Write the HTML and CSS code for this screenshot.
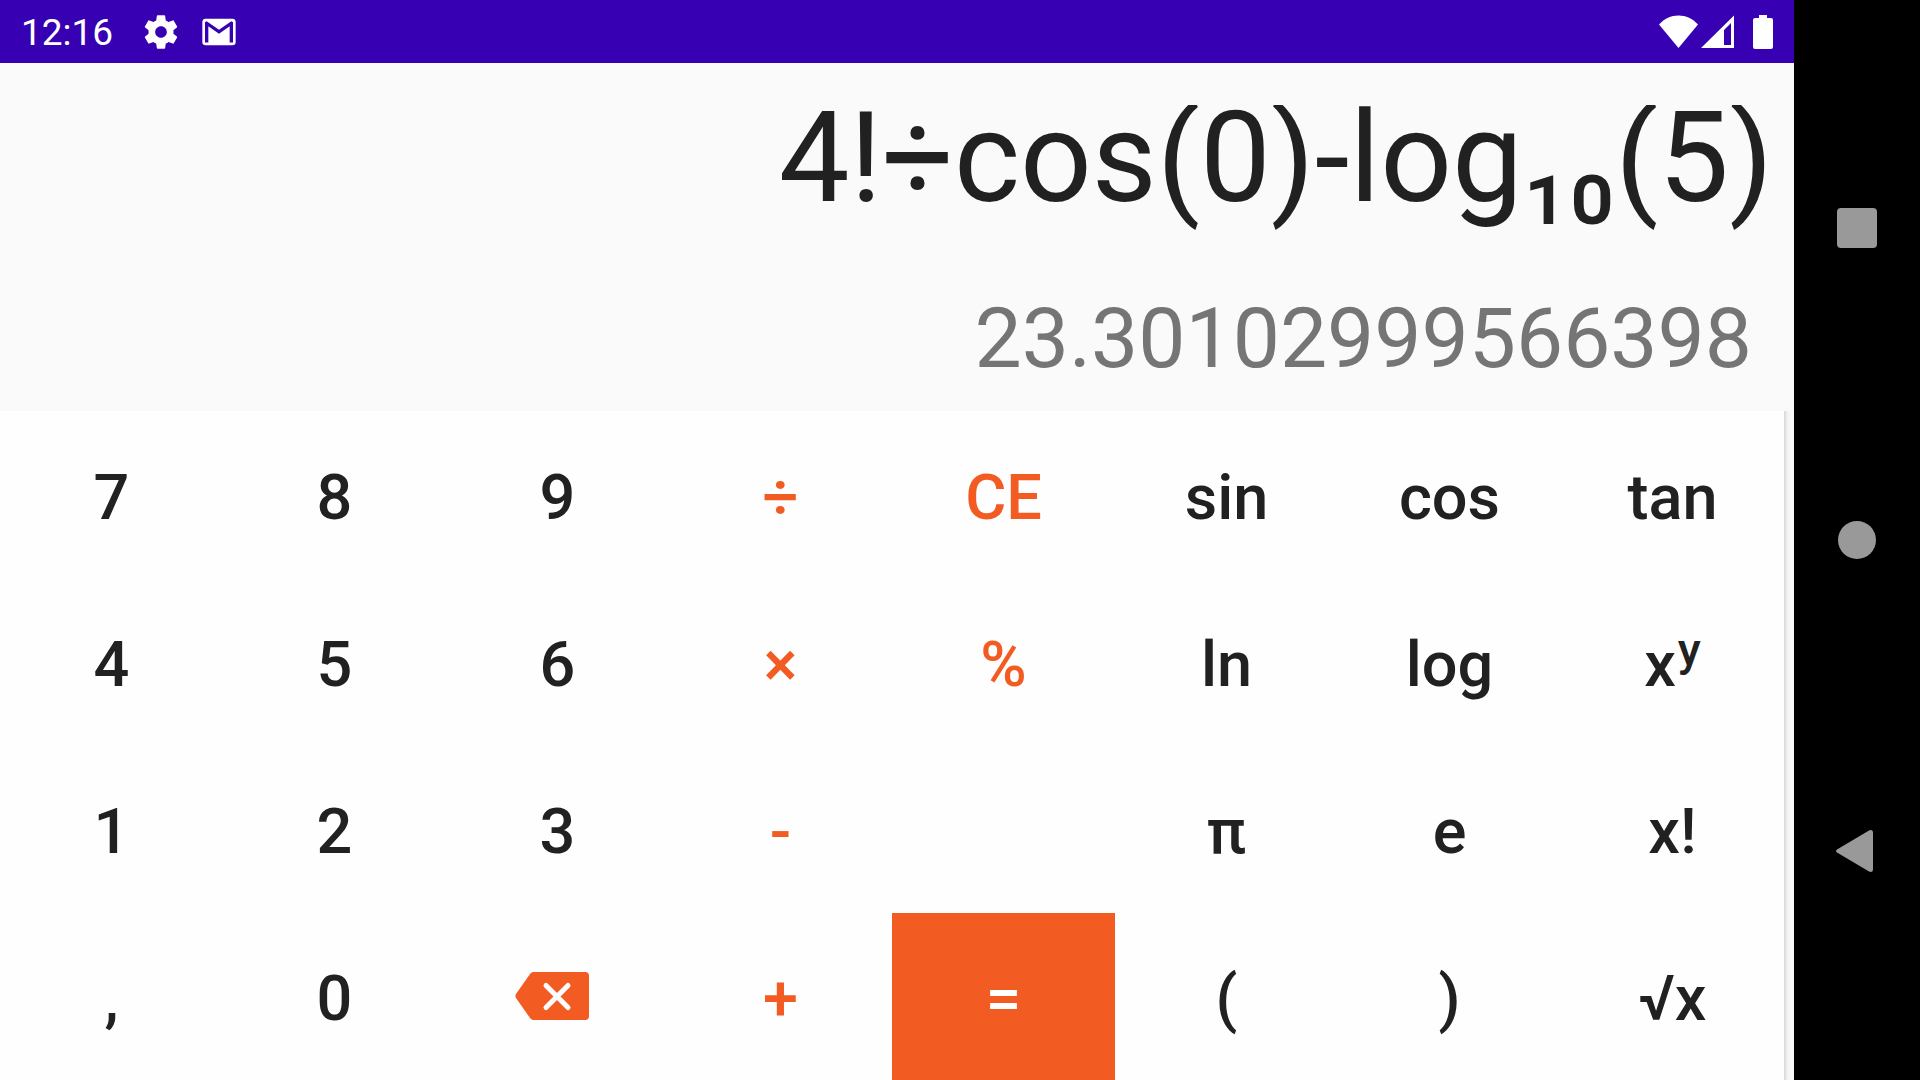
FILE: index.html
```html
<!DOCTYPE html>
<html lang="en">
<head>
<meta charset="utf-8">
<title>Calculator</title>
<link rel="stylesheet" href="styles.css">
</head>
<body>
<div class="screen">
  <div class="app">
    <header class="status">
      <div class="status-left">
        <time class="clock">12:16</time>
        <svg class="status-icon" viewBox="0 0 24 24" aria-hidden="true"><path d="M19.43 12.98c.04-.32.07-.64.07-.98s-.03-.66-.07-.98l2.11-1.65c.19-.15.24-.42.12-.64l-2-3.46c-.12-.22-.39-.3-.61-.22l-2.49 1c-.52-.4-1.08-.73-1.69-.98l-.38-2.65C14.46 2.18 14.25 2 14 2h-4c-.25 0-.46.18-.49.42l-.38 2.65c-.61.25-1.17.59-1.69.98l-2.49-1c-.23-.09-.49 0-.61.22l-2 3.46c-.13.22-.07.49.12.64l2.11 1.65c-.04.32-.07.65-.07.98s.03.66.07.98l-2.11 1.65c-.19.15-.24.42-.12.64l2 3.46c.12.22.39.3.61.22l2.49-1c.52.4 1.08.73 1.69.98l.38 2.65c.03.24.24.42.49.42h4c.25 0 .46-.18.49-.42l.38-2.65c.61-.25 1.17-.59 1.69-.98l2.49 1c.23.09.49 0 .61-.22l2-3.46c.12-.22.07-.49-.12-.64l-2.11-1.65zM12 15.500c-1.930 0-3.500-1.570-3.500-3.500s1.570-3.500 3.500-3.500 3.500 1.570 3.500 3.500-1.570 3.500-3.500 3.500z"/></svg>
        <svg class="status-icon" viewBox="0 0 24 24" aria-hidden="true"><rect x="2" y="4" width="20" height="16" rx="2"/><path fill="#3700b3" d="M3.600 6.100 4.600 5.600 12 10.700 19.400 5.600 20.400 6.100V18.300H18.400V8.600L12 13 5.600 8.600V18.300H3.600z"/></svg>
      </div>
      <div class="status-right">
        <svg class="wifi" viewBox="0 0 40 34" aria-hidden="true"><path d="M1 9.500C6.500 3.500 13 .500 20.500 .500s14 3 19.500 9L20.500 33z"/></svg>
        <svg class="signal" viewBox="0 0 33 34" aria-hidden="true"><path fill-rule="evenodd" d="M33 .500V33H0zM30 8 23 15V30h7z"/></svg>
        <svg class="battery" viewBox="0 0 20 34" aria-hidden="true"><path d="M6 0h8v3h4a2 2 0 0 1 2 2v27a2 2 0 0 1-2 2H2a2 2 0 0 1-2-2V5a2 2 0 0 1 2-2h4z"/></svg>
      </div>
    </header>

    <section class="display">
      <output class="expression">4!÷cos(0)-log₁₀(5)</output>
      <output class="result">23.30102999566398</output>
    </section>

    <main class="keypad">
      <button class="key">7</button>
      <button class="key">8</button>
      <button class="key">9</button>
      <button class="key key-op">÷</button>
      <button class="key key-op">CE</button>
      <button class="key">sin</button>
      <button class="key">cos</button>
      <button class="key">tan</button>

      <button class="key">4</button>
      <button class="key">5</button>
      <button class="key">6</button>
      <button class="key key-op">×</button>
      <button class="key key-op">%</button>
      <button class="key">ln</button>
      <button class="key">log</button>
      <button class="key"><span>x<sup class="power">y</sup></span></button>

      <button class="key">1</button>
      <button class="key">2</button>
      <button class="key">3</button>
      <button class="key key-op">-</button>
      <div class="key-blank"></div>
      <button class="key">π</button>
      <button class="key">e</button>
      <button class="key">x!</button>

      <button class="key">,</button>
      <button class="key">0</button>
      <button class="key key-icon" aria-label="Backspace"><svg class="backspace" viewBox="0 0 86 50" aria-hidden="true"><path fill="#f25c22" d="M18 1H70a4 4 0 0 1 4 4V45a4 4 0 0 1-4 4H18a5 5 0 0 1-3-2L1 27a4 4 0 0 1 0-4L15 3a5 5 0 0 1 3-2z"/><path fill="none" stroke="#fff" stroke-width="5" stroke-linecap="round" d="M31 14.500 53 36.500M53 14.500 31 36.500"/></svg></button>
      <button class="key key-op">+</button>
      <button class="key key-equals">=</button>
      <button class="key">(</button>
      <button class="key">)</button>
      <button class="key">√x</button>
    </main>
  </div>

  <nav class="navbar">
    <button class="nav-button" aria-label="Recent apps"><svg class="nav-icon" viewBox="0 0 42 42" aria-hidden="true"><rect x="1" y="1" width="40" height="40" rx="4"/></svg></button>
    <button class="nav-button" aria-label="Home"><svg class="nav-icon" viewBox="0 0 42 42" aria-hidden="true"><circle cx="21" cy="21" r="19"/></svg></button>
    <button class="nav-button" aria-label="Back"><svg class="nav-icon" viewBox="0 0 42 42" aria-hidden="true"><path d="M1 18.500 33 -.500Q37 -2 37 2V38Q37 42 33 40.500L1 21.500Q-1 20 1 18.500z"/></svg></button>
  </nav>
</div>
</body>
</html>
```
FILE: styles.css
```css
* {
  box-sizing: border-box;
}

body {
  margin: 0;
  font-family: Roboto, "Noto Sans", sans-serif;
  color: #212121;
}

button {
  margin: 0;
  padding: 0;
  border: 0;
  background: none;
  font: inherit;
  color: inherit;
}

svg {
  display: block;
}

.screen {
  display: flex;
  min-height: 100vh;
}

.app {
  flex: 1;
  display: flex;
  flex-direction: column;
  min-width: 0;
  background: #fafafa;
}

.status {
  display: flex;
  justify-content: space-between;
  align-items: center;
  height: 63px;
  padding: 0 21px;
  background: #3700b3;
  color: #fff;
  fill: #fff;
}

.status-left {
  display: flex;
  align-items: center;
  gap: 18px;
}

.clock {
  margin-right: 10px;
  padding-top: 2px;
  font-size: 37px;
  line-height: 42px;
}

.status-icon {
  width: 40px;
  height: 40px;
}

.status-right {
  display: flex;
  align-items: center;
}

.wifi {
  width: 40px;
  height: 34px;
}

.signal {
  width: 33px;
  height: 34px;
  margin: 0 19px 0 3px;
}

.battery {
  width: 20px;
  height: 34px;
}

.display {
  display: flex;
  flex-direction: column;
  align-items: flex-end;
  height: 348px;
  padding: 42px 21px 0;
}

.expression {
  font-size: 126px;
  line-height: 106px;
  white-space: nowrap;
  clip-path: inset(0 0 -40px 0);
}

.result {
  margin: 79px 21px 0 0;
  font-size: 84px;
  line-height: 98px;
  color: #757575;
}

/* The right padding shows the shadow that the keys cast. */
.keypad {
  flex: 1;
  display: grid;
  grid-template-columns: repeat(8, 1fr);
  grid-auto-rows: 1fr;
  padding-right: 10px;
  background: linear-gradient(to left, #fafafa 3px, #f0f0f0 7px, #d6d6d6 10px, #fefefe 10px);
}

.key {
  display: flex;
  justify-content: center;
  align-items: center;
  padding-top: 6px;
  font-size: 63px;
  font-weight: 500;
  line-height: 74px;
}

.key-icon {
  padding-top: 0;
}

.key-op {
  color: #f25c22;
}

.key-equals {
  background: #f25c22;
  color: #fff;
}

.power {
  padding-left: 2px;
  font-size: 47px;
  line-height: 0;
  vertical-align: 20px;
}

.backspace {
  width: 86px;
  height: 50px;
}

.navbar {
  display: flex;
  flex-direction: column;
  width: 126px;
  padding: 72px 0;
  background: #000;
}

.nav-button {
  flex: 1;
  display: flex;
  justify-content: center;
  align-items: center;
}

.nav-icon {
  width: 42px;
  height: 42px;
  fill: #999;
  overflow: visible;
}
```
